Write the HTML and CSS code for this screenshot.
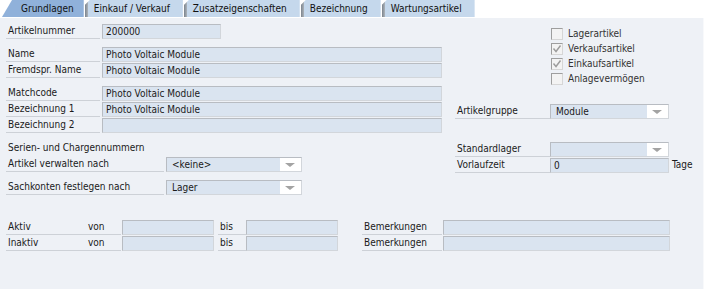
FILE: index.html
```html
<!DOCTYPE html>
<html>
<head>
	<title>Artikelstammdaten</title>
	<meta charset="utf-8">
	<link rel="stylesheet" href="styles.css">
</head>
<body>
	<div class="tabs">
		<div class="tab active">Grundlagen</div>
		<div class="tab">Einkauf / Verkauf</div>
		<div class="tab">Zusatzeigenschaften</div>
		<div class="tab">Bezeichnung</div>
		<div class="tab">Wartungsartikel</div>
	</div>
	<div class="panel">
		<div class="top">
			<div class="left">
				<div class="group">
					<div class="row"><span class="lbl">Artikelnummer</span><span class="field short">200000</span></div>
				</div>
				<div class="group">
					<div class="row"><span class="lbl">Name</span><span class="field long">Photo Voltaic Module</span></div>
					<div class="row"><span class="lbl">Fremdspr. Name</span><span class="field long">Photo Voltaic Module</span></div>
				</div>
				<div class="group">
					<div class="row"><span class="lbl">Matchcode</span><span class="field long">Photo Voltaic Module</span></div>
					<div class="row"><span class="lbl">Bezeichnung 1</span><span class="field long">Photo Voltaic Module</span></div>
					<div class="row"><span class="lbl">Bezeichnung 2</span><span class="field long"></span></div>
				</div>
				<div class="group">
					<div class="row"><span class="caption">Serien- und Chargennummern</span></div>
					<div class="row"><span class="lbl mid">Artikel verwalten nach</span><span class="combo mid">&lt;keine&gt;</span></div>
				</div>
				<div class="row"><span class="lbl mid">Sachkonten festlegen nach</span><span class="combo mid">Lager</span></div>
			</div>
			<div class="right">
				<div class="checks">
					<div class="check"><span class="box"></span>Lagerartikel</div>
					<div class="check"><span class="box on"><svg width="10" height="10" viewBox="0 0 10 10"><polyline points="1.5,4.5 4,7.5 8.5,1.5" fill="none" stroke="#9c9c9c" stroke-width="1.4"/></svg></span>Verkaufsartikel</div>
					<div class="check"><span class="box on"><svg width="10" height="10" viewBox="0 0 10 10"><polyline points="1.5,4.5 4,7.5 8.5,1.5" fill="none" stroke="#9c9c9c" stroke-width="1.4"/></svg></span>Einkaufsartikel</div>
					<div class="check"><span class="box"></span>Anlagevermögen</div>
				</div>
				<div class="row gruppe"><span class="lbl">Artikelgruppe</span><span class="combo side">Module</span></div>
				<div class="row lager"><span class="lbl">Standardlager</span><span class="combo side"></span></div>
				<div class="row"><span class="lbl">Vorlaufzeit</span><span class="field side">0</span><span class="unit">Tage</span></div>
			</div>
		</div>
		<div class="dates">
			<div class="row">
				<span class="lbl pair"><span class="first">Aktiv</span>von</span><span class="field date"></span>
				<span class="lbl bis">bis</span><span class="field date"></span>
				<span class="lbl note">Bemerkungen</span><span class="field remark"></span>
			</div>
			<div class="row">
				<span class="lbl pair"><span class="first">Inaktiv</span>von</span><span class="field date"></span>
				<span class="lbl bis">bis</span><span class="field date"></span>
				<span class="lbl note">Bemerkungen</span><span class="field remark"></span>
			</div>
		</div>
	</div>
</body>
</html>
```

FILE: styles.css
```css
*{
	margin:0;
	padding:0;
	box-sizing:border-box;
}
body{
	width:704px;
	height:289px;
	overflow:hidden;
	background:#fff;
	color:#1a1a1a;
	font-family:"DejaVu Sans Condensed","DejaVu Sans",sans-serif;
	font-stretch:condensed;
	font-size:10px;
}
/* tabs */
.tabs{
	display:flex;
	height:18px;
	padding-left:2px;
}
.tab{
	height:17px;
	line-height:17px;
	padding:0 13px 0 9px;
	margin-right:1px;
	color:#111;
	background:linear-gradient(to right,#7b838c,#adb4bb 3px,#c5d8ec 3px);
	clip-path:polygon(0 5px,5px 0,100% 0,100% 100%,0 100%);
}
.tab.active{
	padding:0 10px 0 19px;
	background:#90b1da;
	clip-path:polygon(10px 0,100% 0,100% 100%,0 100%);
}
/* panel */
.panel{
	height:271px;
	background:#eef1f6;
	border-right:1px solid #f8f9fb;
	padding:6px 0 0 6px;
}
.top{
	display:flex;
}
.left{
	width:436px;
}
.right{
	margin-left:13px;
	padding-top:2px;
}
.group{
	margin-bottom:8px;
}
.row{
	display:flex;
	height:15px;
	margin-bottom:1px;
	line-height:14px;
}
.lbl{
	width:94px;
	margin-right:2px;
	padding-left:2px;
	border-bottom:1px solid #cdd1d7;
	white-space:nowrap;
}
.lbl.mid{
	width:158px;
}
.caption{
	padding-left:2px;
}
.field,.combo{
	height:15px;
	line-height:13px;
	padding-left:3px;
	background:#dae4f0;
	border:1px solid;
	border-color:#b8bcc2 #d2d6db #d2d6db #b8bcc2;
	white-space:nowrap;
}
.field.short{
	width:119px;
}
.field.long{
	width:340px;
}
.combo{
	position:relative;
	padding-left:5px;
	background:linear-gradient(to right,#dae4f0 calc(100% - 21px),#fff calc(100% - 21px));
}
.combo::after{
	content:'';
	position:absolute;
	right:6px;
	top:5px;
	border-left:5px solid transparent;
	border-right:5px solid transparent;
	border-top:4px solid #a3a3a3;
}
.combo.mid{
	width:136px;
}
.right .lbl{
	width:95px;
	margin-right:0;
}
.combo.side,.field.side{
	width:119px;
}
.unit{
	margin-left:3px;
}
.gruppe{
	margin-top:18px;
}
.lager{
	margin-top:23px;
}
/* checkboxes */
.checks{
	padding-left:96px;
}
.check{
	display:flex;
	align-items:center;
	height:15px;
	color:#333;
}
.box{
	display:flex;
	align-items:center;
	justify-content:center;
	width:12px;
	height:12px;
	margin-right:5px;
	background:#f3f3f3;
	border:1px solid;
	border-color:#9e9e9e #d6d6d6 #d6d6d6 #9e9e9e;
}
/* dates */
.dates{
	margin-top:24px;
}
.lbl.pair{
	display:flex;
	width:115px;
	margin-right:1px;
}
.lbl .first{
	width:80px;
}
.field.date{
	width:92px;
}
.lbl.bis{
	width:28px;
	margin:0 0 0 4px;
}
.lbl.note{
	width:80px;
	margin:0 1px 0 24px;
}
.field.remark{
	width:227px;
}
```
